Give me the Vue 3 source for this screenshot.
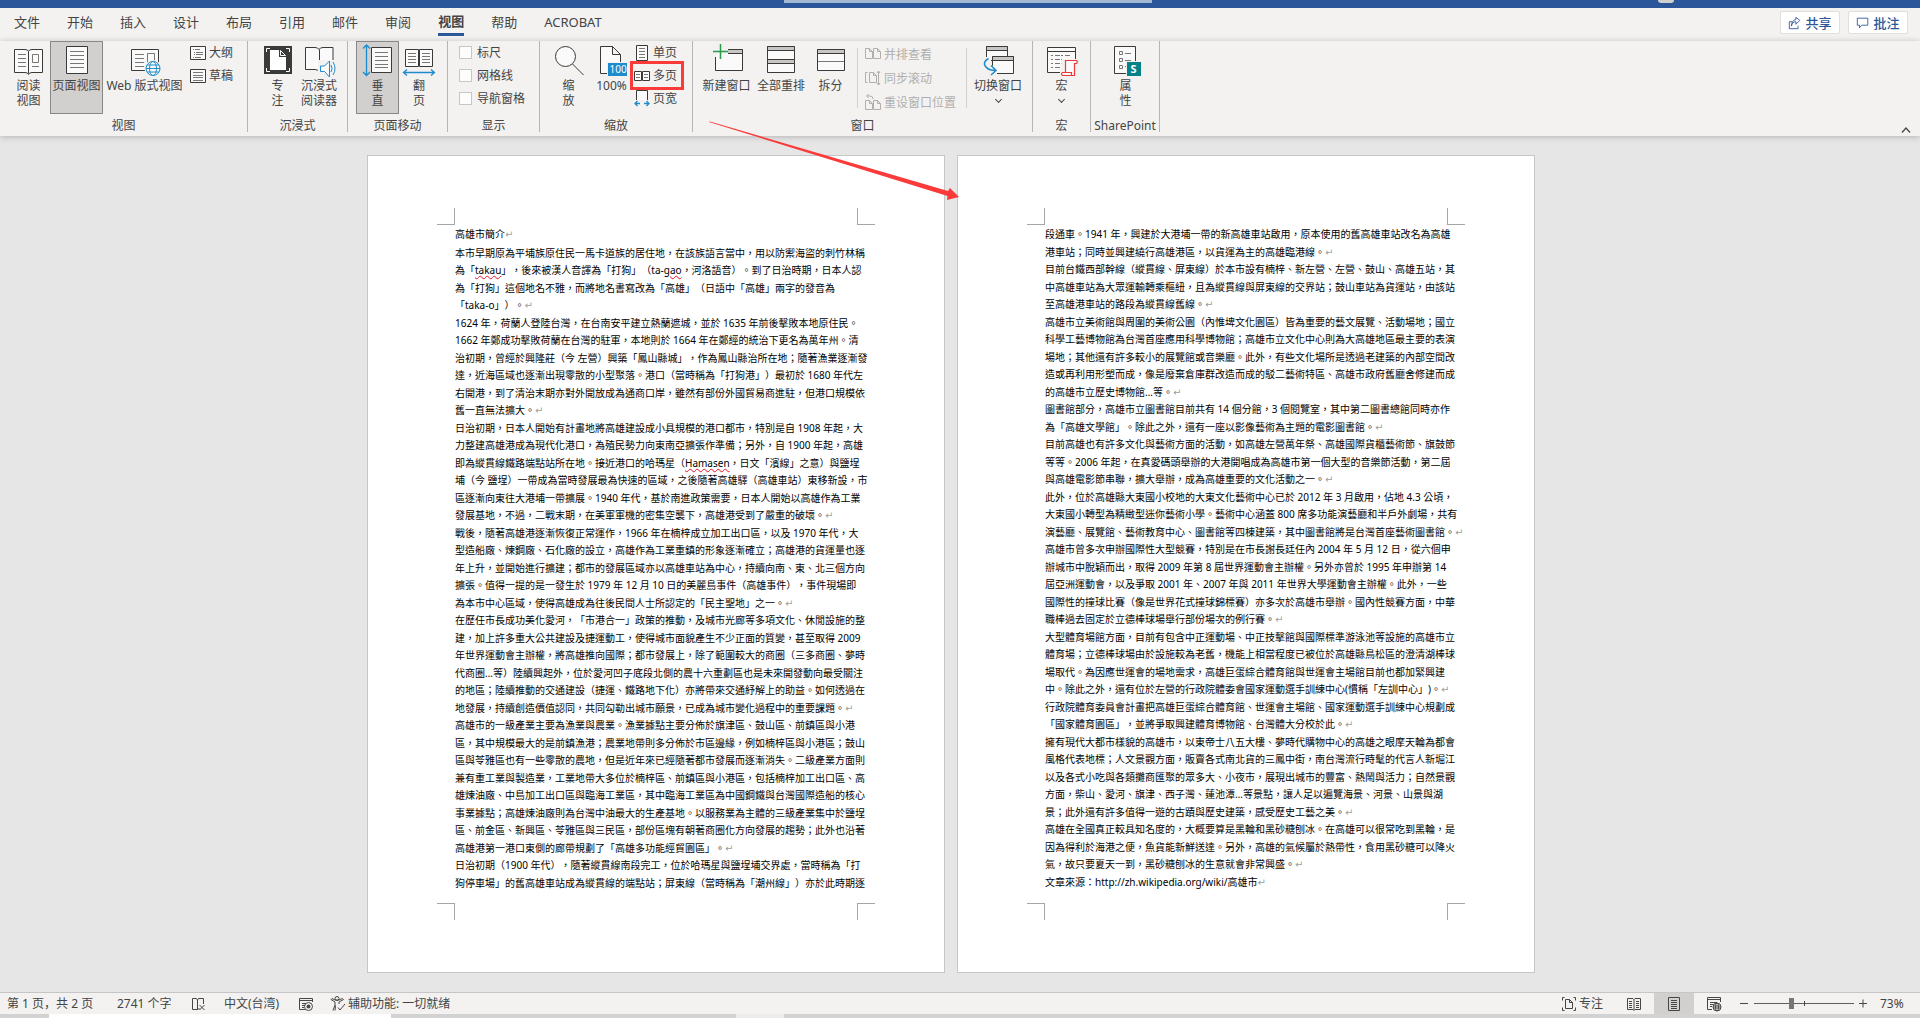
<script setup>
import { ref } from 'vue'

const tabs = ['文件', '开始', '插入', '设计', '布局', '引用', '邮件', '审阅', '视图', '帮助', 'ACROBAT']
const activeTab = ref('视图')
const zoom = ref(37)

const dark = 'fill="#fafafa" stroke="#3b3a39"'
const grey = 'fill="none" stroke="#797775"'
const blue = 'fill="none" stroke="#1e8bcd"'

const icons = {
  read: `<path ${dark} d="M1.5 4.500H12q3 0 3.500 2 .5-2 3.500-2h10.500v23H19q-3 0-3.500 2-.5-2-3.500-2H1.500zM15.500 6.500v22"/><path ${grey} d="M5 9.500h8M5 13.500h8M5 17.500h8M5 21.500h8M19.500 9.500h6v8h-6zM19 21.500h7"/>`,
  page: `<path ${dark} d="M5.500 1.500h21v27h-21z"/><path ${grey} d="M9 6.500h14M9 10.500h14M9 14.500h14M9 18.500h14M9 22.500h14"/>`,
  web: `<path ${dark} d="M2.500 4.500h27v21h-27z"/><path ${grey} d="M6 9.500h9M6 13.500h9M6 17.500h9M6 21.500h9M18.500 18V8.500h7V16"/><circle cx="24" cy="23.500" r="8.500" fill="#f3f2f1"/><g fill="#fafafa" stroke="#1e8bcd"><circle cx="24" cy="23.500" r="7"/><ellipse cx="24" cy="23.500" rx="3.500" ry="7"/><path d="M17 23.500h14M18 20h12M18 27h12"/></g>`,
  focus: `<path fill="#3b3a39" d="M2 1h28v28H2z"/><path fill="none" stroke="#fff" d="M4.500 7V3.500H8M24 3.500h3.500V7M27.500 23v3.500H24M8 26.500H4.500V23"/><path fill="#fff" d="M8 5h9v7h7v13H8z"/><path fill="none" stroke="#fff" d="M18.500 5.500v5h5z"/>`,
  immersive: `<path ${dark} d="M2.500 2.500H12q3 0 4 2 1-2 4-2h10v22H20q-3 0-4 2-1-2-4-2H2.500zM16.500 4.500v22"/><path fill="#f3f2f1" d="M15 15h17v17H15z"/><path fill="#fafafa" stroke="#1e8bcd" d="M17.500 21h4l5-5v16l-5-5.500h-4z"/><path ${blue} d="M28 20q2 3.500 0 7M30 17q4 6.500 0 13"/>`,
  vertical: `<path ${dark} d="M9.500 2.500h20v25h-20z"/><path ${grey} d="M13 7.500h13M13 11.500h13M13 15.500h13M13 19.500h13M13 22.500h13"/><path ${blue} stroke-width="1.300" d="M4.500 0v30M1 3.500 4.500 0 8 3.500M1 27l3.500 3.500L8 27"/>`,
  flip: `<path ${dark} d="M2.500 4.500h13v17h-13zM16.500 4.500h13v17h-13z"/><path ${grey} d="M5 8.500h8M5 11.500h8M5 14.500h8M5 17.500h8M19 8.500h8M19 11.500h8M19 14.500h8M19 17.500h8"/><path ${blue} stroke-width="1.300" d="M1 27.500h30M4 24.500l-3.500 3L4 30.500M28 24.500l3.500 3-3.500 3"/>`,
  magnifier: `<circle cx="12.500" cy="11.500" r="10" ${dark}/><path fill="none" stroke="#3b3a39" d="M19.500 19l11 11"/>`,
  hundred: `<path ${dark} d="M4.500 1.500h12l8 8v19h-20zM16.500 1.500v8h8"/><path fill="#1e8bcd" stroke="#f3f2f1" d="M11.500 17.500h20v14h-20z"/><text x="13.500" y="28" font-size="10" fill="#fff">100</text>`,
  newWindow: `<path ${dark} d="M4.500 4.500h27v21h-27z"/><path fill="#c8c6c4" stroke="#3b3a39" d="M4.500 4.500h27v4h-27z"/><path fill="#f3f2f1" d="M0 0h17v12H0z"/><path fill="none" stroke="#3b3a39" d="M4.500 12v13.500"/><path fill="#fafafa" d="M5 9h13v7H5z"/><path fill="none" stroke="#2b9a47" stroke-width="1.500" d="M9.500-1v15M2 6.500h15"/>`,
  arrange: `<path ${dark} d="M2.500 1.500h27v13h-27zM2.500 14.500h27v13h-27z"/><path fill="#c8c6c4" stroke="#3b3a39" d="M2.500 1.500h27v4h-27zM2.500 14.500h27v4h-27z"/>`,
  split: `<path ${dark} d="M2.500 4.500h27v21h-27z"/><path fill="#c8c6c4" stroke="#3b3a39" d="M2.500 4.500h27v4h-27z"/><path ${grey} d="M3 16.500h26"/>`,
  switchWindow: `<path ${dark} d="M4.500 1.500h21v14h-21z"/><path fill="#c8c6c4" stroke="#3b3a39" d="M4.500 1.500h21v4h-21z"/><path ${dark} d="M10.500 11.500h21v17h-21z"/><path fill="#c8c6c4" stroke="#3b3a39" d="M10.500 11.500h21v4h-21z"/><path fill="#f3f2f1" d="M1 12h8v8l6 3v8H5L1 22z"/><path fill="none" stroke="#3b3a39" d="M10.500 17v3"/><path ${blue} stroke-width="1.500" d="M6.500 13.500Q2 16 2.500 19.500 4 25 13 25.500M9 20.500l5 5-5 4.500"/>`,
  macro: `<path ${dark} d="M1.500 2.500h28v25h-28z"/><path fill="none" stroke="#3b3a39" d="M1.500 6.500h28"/><path ${grey} stroke-dasharray="2 2 5 1" d="M5 10.500h20M5 14.500h14M5 18.500h12M5 22.500h10"/><path fill="#f3f2f1" d="M16 14h17v18H14v-6z"/><path fill="#fafafa" stroke="#f0383a" stroke-width="1.200" d="M19.500 15.500h11q1.500 1 0 3h-2v12h-12q-2-1.500 0-3h3zM16.500 27.500h9v3"/>`,
  props: `<path ${dark} d="M4.500 1.500h21v27h-21z"/><path ${grey} d="M9.500 6.500h3v3h-3zM9.500 13.500h3v3h-3zM9.500 20.500h3v3h-3zM15 8.500h6M15 15.500h6M15 21.500h4"/><path fill="#038387" stroke="#f3f2f1" d="M16.500 16.500h15v15h-15z"/><text x="20.500" y="28" font-size="11" font-weight="700" fill="#fff">S</text>`,
  outline: `<path ${dark} d="M.5 1.500h15v13H.500z"/><path ${grey} d="M3 4.500h1M5 4.500h5M4 7.500h1M6 7.500h7M4 9.500h1M6 9.500h7M3 12.500h1M5 12.500h6"/>`,
  draft: `<path ${dark} d="M.5 1.500h15v13H.500z"/><path ${grey} d="M3 4.500h10M3 7.500h10M3 9.500h10M3 12.500h10"/>`,
  onePage: `<path ${dark} d="M2.500.5h11v15h-11z"/><path ${grey} d="M5 3.500h6M5 6.500h6M5 9.500h6M5 12.500h6"/>`,
  multiPage: `<path ${dark} d="M.5 3.500h7v9h-7zM8.500 3.500h7v9h-7z"/><path ${grey} d="M2 6.500h4M2 9.500h4M10 6.500h4M10 9.500h4"/>`,
  pageWidth: `<path ${dark} d="M2.500 9V-.5h11V9"/><path ${blue} stroke-width="1.300" d="M6 12.500H1M10 12.500h5M3.500 10 1 12.500 3.500 15M12.500 10l2.500 2.500-2.500 2.500"/>`,
  sideBySide: `<path fill="none" stroke="#b1afad" d="M.5 2.500h4l3 3v7h-7zM8.500 2.500h4l3 3v7h-7zM4.500 2.500v3h3M12.500 2.500v3h3"/>`,
  syncScroll: `<path fill="none" stroke="#b1afad" d="M2.500 2.500H.500v10h2M4.500 2.500h4l3 3v7h-7zM8.500 2.500v3h3M13.500 1v14M12 3l1.500-2L15 3M12 13l1.500 2 1.500-2"/>`,
  resetWindow: `<path fill="none" stroke="#b1afad" d="M.5 6.500h4l3 3v6h-7zM8.500 6.500h4l3 3v6h-7zM4.500 6.500v3h3M12.500 6.500v3h3M3.500 0l-2 2 2 2M2 2h3q3 0 3 3"/>`,
  proof: `<path fill="none" stroke="#484644" d="M6.500 13.500h-5v-11h4l1 1.500 1-1.500h5V8M6.500 4v9.500l2-1M8.500 9l5 5M13.500 9l-5 5"/>`,
  record: `<path fill="none" stroke="#484644" d="M7 13.500H1.500v-11h13V6M1.500 4.500h13M4 7.500h4M4 9.500h3M4 11.500h2"/><circle cx="10.500" cy="10.500" r="4" fill="none" stroke="#484644"/><circle cx="10.500" cy="10.500" r="2" fill="#484644"/>`,
  access: `<path fill="none" stroke="#484644" d="M1 3.500 5 6v3l-2 5.500M13.500 3.500 9 6v2M1 3.500l1-1 3 1.500h4l3.500-1.500 1 1M5.500 9.500l-.5 5M8 11.500l2 2.500 5-6"/><circle cx="7" cy="2.500" r="2" fill="none" stroke="#484644"/>`,
  focusSmall: `<path fill="none" stroke="#484644" d="M3.500 1.500h-2v3M12.500 1.500h2v3M14.500 11.500v3h-2M3.500 14.500h-2v-3M4.500 3.500h4l3 3v6h-7zM8.500 3.500v3h3"/>`,
  readSmall: `<path fill="none" stroke="#484644" d="M1.500 2.500H7l1 1 1-1h5.500v11H9l-1 1-1-1H1.500zM8 3.500v10.500M3 5.500h3M3 7.500h3M3 9.500h3M3 11.500h3M10 5.500h3M10 7.500h3M10 9.500h3M10 11.500h3"/>`,
  printSmall: `<path fill="none" stroke="#484644" d="M2.500 1.500h11v13h-11zM5 4.500h6M5 6.500h6M5 8.500h6M5 10.500h6M5 12.500h6"/>`,
  webSmall: `<path fill="none" stroke="#484644" d="M6 13.500H1.500v-12h13V6M1.500 3.500h13M4 6.500h7M4 8.500h4M4 10.500h2"/><g fill="#f3f2f1" stroke="#484644"><circle cx="11" cy="11" r="4"/><ellipse cx="11" cy="11" rx="1.500" ry="4"/><path d="M7 10h8M7 12h8"/></g>`,
  share: `<path fill="none" stroke="#2b579a" d="M5 6.500H1.500v8h10V11M4 11.500Q4.500 6.500 9 6.500V9.500l4.500-4.500L9 1.500v2.500Q4 5 4 11.500"/>`,
  comment: `<path fill="none" stroke="#2b579a" d="M1.500 2.500h12v8h-7L4 13.500v-3H1.500z"/>`
}

const pages = [
  [
    '高雄市簡介¶',
    '本市早期原為平埔族原住民一馬卡道族的居住地，在該族語言當中，用以防禦海盜的刺竹林稱',
    '為「~takau~」，後來被漢人音譯為「打狗」（ta-~gao~，河洛語音）。到了日治時期，日本人認',
    '為「打狗」這個地名不雅，而將地名書寫改為「高雄」（日語中「高雄」兩字的發音為',
    '「taka-o」）。¶',
    '1624 年，荷蘭人登陸台灣，在台南安平建立熱蘭遮城，並於 1635 年前後擊敗本地原住民。',
    '1662 年鄭成功擊敗荷蘭在台灣的駐軍，本地則於 1664 年在鄭經的統治下更名為萬年州。清',
    '治初期，曾經於興隆莊（今 左營）興築「鳳山縣城」，作為鳳山縣治所在地；隨著漁業逐漸發',
    '達，近海區域也逐漸出現零散的小型聚落。港口（當時稱為「打狗港」）最初於 1680 年代左',
    '右開港，到了清治末期亦對外開放成為通商口岸，雖然有部份外國貿易商進駐，但港口規模依',
    '舊一直無法擴大。¶',
    '日治初期，日本人開始有計畫地將高雄建設成小具規模的港口都市，特別是自 1908 年起，大',
    '力整建高雄港成為現代化港口，為殖民勢力向東南亞擴張作準備；另外，自 1900 年起，高雄',
    '即為縱貫線鐵路端點站所在地。接近港口的哈瑪星（~Hamasen~，日文「濱線」之意）與鹽埕',
    '埔（今 鹽埕）一帶成為當時發展最為快速的區域，之後隨著高雄驛（高雄車站）東移新設，市',
    '區逐漸向東往大港埔一帶擴展。1940 年代，基於南進政策需要，日本人開始以高雄作為工業',
    '發展基地，不過，二戰末期，在美軍軍機的密集空襲下，高雄港受到了嚴重的破壞。¶',
    '戰後，隨著高雄港逐漸恢復正常運作，1966 年在楠梓成立加工出口區，以及 1970 年代，大',
    '型造船廠、煉鋼廠、石化廠的設立，高雄作為工業重鎮的形象逐漸確立；高雄港的貨運量也逐',
    '年上升，並開始進行擴建；都市的發展區域亦以高雄車站為中心，持續向南、東、北三個方向',
    '擴張。值得一提的是一發生於 1979 年 12 月 10 日的美麗島事件（高雄事件），事件現場即',
    '為本市中心區域，使得高雄成為往後民間人士所認定的「民主聖地」之一。¶',
    '在歷任市長成功美化愛河，「市港合一」政策的推動，及城市光廊等多項文化、休閒設施的整',
    '建，加上許多重大公共建設及捷運動工，使得城市面貌產生不少正面的質變，甚至取得 2009',
    '年世界運動會主辦權，將高雄推向國際；都市發展上，除了範圍較大的商圈（三多商圈、夢時',
    '代商圈…等）陸續興起外，位於愛河凹子底段北側的農十六重劃區也是未來開發動向最受關注',
    '的地區；陸續推動的交通建設（捷運、鐵路地下化）亦將帶來交通紓解上的助益。如何透過在',
    '地發展，持續創造價值認同，共同勾勒出城市願景，已成為城市變化過程中的重要課題。¶',
    '高雄市的一級產業主要為漁業與農業。漁業據點主要分佈於旗津區、鼓山區、前鎮區與小港',
    '區，其中規模最大的是前鎮漁港；農業地帶則多分佈於市區邊緣，例如楠梓區與小港區；鼓山',
    '區與苓雅區也有一些零散的農地，但是近年來已經隨著都市發展而逐漸消失。二級產業方面則',
    '兼有重工業與製造業，工業地帶大多位於楠梓區、前鎮區與小港區，包括楠梓加工出口區、高',
    '雄煉油廠、中島加工出口區與臨海工業區，其中臨海工業區為中國鋼鐵與台灣國際造船的核心',
    '事業據點；高雄煉油廠則為台灣中油最大的生產基地。以服務業為主體的三級產業集中於鹽埕',
    '區、前金區、新興區、苓雅區與三民區，部份區塊有朝著商圈化方向發展的趨勢；此外也沿著',
    '高雄港第一港口東側的廊帶規劃了「高雄多功能經貿園區」。¶',
    '日治初期（1900 年代），隨著縱貫線南段完工，位於哈瑪星與鹽埕埔交界處，當時稱為「打',
    '狗停車場」的舊高雄車站成為縱貫線的端點站；屏東線（當時稱為「潮州線」）亦於此時期逐'
  ],
  [
    '段通車。1941 年，興建於大港埔一帶的新高雄車站啟用，原本使用的舊高雄車站改名為高雄',
    '港車站；同時並興建繞行高雄港區，以貨運為主的高雄臨港線。¶',
    '目前台鐵西部幹線（縱貫線、屏東線）於本市設有楠梓、新左營、左營、鼓山、高雄五站，其',
    '中高雄車站為大眾運輸轉乘樞紐，且為縱貫線與屏東線的交界站；鼓山車站為貨運站，由該站',
    '至高雄港車站的路段為縱貫線舊線。¶',
    '高雄市立美術館與周圍的美術公園（內惟埤文化園區）皆為重要的藝文展覽、活動場地；國立',
    '科學工藝博物館為台灣首座應用科學博物館；高雄市立文化中心則為大高雄地區最主要的表演',
    '場地；其他還有許多較小的展覽館或音樂廳。此外，有些文化場所是透過老建築的內部空間改',
    '造或再利用形塑而成，像是廢棄倉庫群改造而成的駁二藝術特區、高雄市政府舊廳舍修建而成',
    '的高雄市立歷史博物館…等。¶',
    '圖書館部分，高雄市立圖書館目前共有 14 個分館，3 個閱覽室，其中第二圖書總館同時亦作',
    '為「高雄文學館」。除此之外，還有一座以影像藝術為主題的電影圖書館。¶',
    '目前高雄也有許多文化與藝術方面的活動，如高雄左營萬年祭、高雄國際貨櫃藝術節、旗鼓節',
    '等等。2006 年起，在真愛碼頭舉辦的大港開唱成為高雄市第一個大型的音樂節活動，第二屆',
    '與高雄電影節串聯，擴大舉辦，成為高雄重要的文化活動之一。¶',
    '此外，位於高雄縣大東國小校地的大東文化藝術中心已於 2012 年 3 月啟用，佔地 4.3 公頃，',
    '大東國小轉型為精緻型迷你藝術小學。藝術中心涵蓋 800 席多功能演藝廳和半戶外劇場，共有',
    '演藝廳、展覽館、藝術教育中心、圖書館等四棟建築，其中圖書館將是台灣首座藝術圖書館。¶',
    '高雄市曾多次申辦國際性大型競賽，特別是在市長謝長廷任內 2004 年 5 月 12 日，從六個申',
    '辦城市中脫穎而出，取得 2009 年第 8 屆世界運動會主辦權。另外亦曾於 1995 年申辦第 14',
    '屆亞洲運動會，以及爭取 2001 年、2007 年與 2011 年世界大學運動會主辦權。此外，一些',
    '國際性的撞球比賽（像是世界花式撞球錦標賽）亦多次於高雄市舉辦。國內性競賽方面，中華',
    '職棒過去固定於立德棒球場舉行部份場次的例行賽。¶',
    '大型體育場館方面，目前有包含中正運動場、中正技擊館與國際標準游泳池等設施的高雄市立',
    '體育場；立德棒球場由於設施較為老舊，機能上相當程度已被位於高雄縣鳥松區的澄清湖棒球',
    '場取代。為因應世運會的場地需求，高雄巨蛋綜合體育館與世運會主場館目前也都加緊興建',
    '中。除此之外，還有位於左營的行政院體委會國家運動選手訓練中心(慣稱「左訓中心」)。¶',
    '行政院體育委員會計畫把高雄巨蛋綜合體育館、世運會主場館、國家運動選手訓練中心規劃成',
    '「國家體育園區」，並將爭取興建體育博物館、台灣體大分校於此。¶',
    '擁有現代大都市樣貌的高雄市，以東帝士八五大樓、夢時代購物中心的高雄之眼摩天輪為都會',
    '風格代表地標；人文景觀方面，販賣各式南北貨的三鳳中街，南台灣流行時髦的代言人新堀江',
    '以及各式小吃與各類攤商匯聚的眾多大、小夜市，展現出城市的豐富、熱鬧與活力；自然景觀',
    '方面，柴山、愛河、旗津、西子灣、蓮池潭…等景點，讓人足以遍覽海景、河景、山景與湖',
    '景；此外還有許多值得一遊的古蹟與歷史建築，感受歷史工藝之美。¶',
    '高雄在全國真正較具知名度的，大概要算是黑輪和黑砂糖刨冰。在高雄可以很常吃到黑輪，是',
    '因為得利於海港之便，魚貨能新鮮送達。另外，高雄的氣候屬於熱帶性，食用黑砂糖可以降火',
    '氣，故只要夏天一到，黑砂糖刨冰的生意就會非常興盛。¶',
    '文章來源：http://zh.wikipedia.org/wiki/高雄市¶'
  ]
]

// ~word~ marks a misspelling, ¶ the end of a paragraph
const docs = pages.map(lines => lines.map(line => ({
  end: line.endsWith('¶'),
  parts: line.replace('¶', '').split('~')
})))
</script>

<template>
  <div class="app">
    <header class="titlebar">
      <span class="search"></span>
      <span class="avatar"></span>
    </header>

    <nav class="tabs">
      <button v-for="t in tabs" :key="t" class="tab" :class="{ active: t === activeTab }" @click="activeTab = t">{{ t }}</button>
      <div class="actions">
        <button class="action"><svg class="small" viewBox="0 0 16 16" v-html="icons.share" />共享</button>
        <button class="action"><svg class="small" viewBox="0 0 16 16" v-html="icons.comment" />批注</button>
      </div>
    </nav>

    <div class="ribbon">
      <section class="group g-views">
        <div class="tools">
          <button class="big w43"><svg viewBox="0 0 32 32" v-html="icons.read" />阅读<br>视图</button>
          <button class="big w53 on"><svg viewBox="0 0 32 32" v-html="icons.page" />页面视图</button>
          <button class="big w83"><svg viewBox="0 0 32 32" v-html="icons.web" />Web 版式视图</button>
          <div class="stack">
            <button class="row"><svg class="small" viewBox="0 0 16 16" v-html="icons.outline" />大纲</button>
            <button class="row"><svg class="small" viewBox="0 0 16 16" v-html="icons.draft" />草稿</button>
          </div>
        </div>
        <h2>视图</h2>
      </section>

      <section class="group g-immersive">
        <div class="tools">
          <button class="big w43"><svg viewBox="0 0 32 32" v-html="icons.focus" />专<br>注</button>
          <button class="big w40"><svg viewBox="0 0 32 32" v-html="icons.immersive" />沉浸式<br>阅读器</button>
        </div>
        <h2>沉浸式</h2>
      </section>

      <section class="group g-immersive">
        <div class="tools">
          <button class="big w43 on"><svg viewBox="0 0 32 32" v-html="icons.vertical" />垂<br>直</button>
          <button class="big w40"><svg viewBox="0 0 32 32" v-html="icons.flip" />翻<br>页</button>
        </div>
        <h2>页面移动</h2>
      </section>

      <section class="group g-show">
        <div class="tools">
          <div class="stack">
            <label class="row"><input type="checkbox">标尺</label>
            <label class="row"><input type="checkbox">网格线</label>
            <label class="row"><input type="checkbox">导航窗格</label>
          </div>
        </div>
        <h2>显示</h2>
      </section>

      <section class="group g-zoom">
        <div class="tools">
          <button class="big w43"><svg viewBox="0 0 32 32" v-html="icons.magnifier" />缩<br>放</button>
          <button class="big w43"><svg viewBox="0 0 32 32" v-html="icons.hundred" />100%</button>
          <div class="stack flush">
            <button class="row"><svg class="small" viewBox="0 0 16 16" v-html="icons.onePage" />单页</button>
            <button class="row marked"><svg class="small" viewBox="0 0 16 16" v-html="icons.multiPage" />多页</button>
            <button class="row"><svg class="small" viewBox="0 0 16 16" v-html="icons.pageWidth" />页宽</button>
          </div>
        </div>
        <h2>缩放</h2>
      </section>

      <section class="group g-window">
        <div class="tools">
          <button class="big w53"><svg viewBox="0 0 32 32" v-html="icons.newWindow" />新建窗口</button>
          <button class="big w56"><svg viewBox="0 0 32 32" v-html="icons.arrange" />全部重排</button>
          <button class="big w43"><svg viewBox="0 0 32 32" v-html="icons.split" />拆分</button>
          <div class="stack inner">
            <button class="row" disabled><svg class="small" viewBox="0 0 16 16" v-html="icons.sideBySide" />并排查看</button>
            <button class="row" disabled><svg class="small" viewBox="0 0 16 16" v-html="icons.syncScroll" />同步滚动</button>
            <button class="row" disabled><svg class="small" viewBox="0 0 16 16" v-html="icons.resetWindow" />重设窗口位置</button>
          </div>
          <button class="big w56"><svg viewBox="0 0 32 32" v-html="icons.switchWindow" />切换窗口<i class="caret"></i></button>
        </div>
        <h2>窗口</h2>
      </section>

      <section class="group g-macro">
        <div class="tools">
          <button class="big w43"><svg viewBox="0 0 32 32" v-html="icons.macro" />宏<i class="caret"></i></button>
        </div>
        <h2>宏</h2>
      </section>

      <section class="group g-share">
        <div class="tools">
          <button class="big w43"><svg viewBox="0 0 32 32" v-html="icons.props" />属<br>性</button>
        </div>
        <h2>SharePoint</h2>
      </section>

      <button class="collapse" aria-label="折叠功能区"><svg viewBox="0 0 10 6"><path d="M1 5.500 5 1l4 4.500" fill="none" stroke="#484644" stroke-width="1.300" /></svg></button>
    </div>

    <main class="canvas">
      <article v-for="(doc, p) in docs" :key="p" class="sheet">
        <div class="corners top"><span></span><span></span></div>
        <div class="text">
          <p v-for="(line, i) in doc" :key="i" :class="{ title: p === 0 && i === 0 }"><template v-for="(part, k) in line.parts" :key="k"><u v-if="k % 2">{{ part }}</u><template v-else>{{ part }}</template></template><span v-if="line.end" class="mark">↵</span></p>
        </div>
        <div class="corners bottom"><span></span><span></span></div>
      </article>
    </main>

    <footer class="status">
      <span class="s-page">第 1 页，共 2 页</span>
      <span class="s-words">2741 个字</span>
      <svg class="small" viewBox="0 0 16 16" v-html="icons.proof" />
      <span class="s-lang">中文(台湾)</span>
      <svg class="small" viewBox="0 0 16 16" v-html="icons.record" />
      <span class="s-access"><svg class="small" viewBox="0 0 16 16" v-html="icons.access" />辅助功能: 一切就绪</span>
      <div class="views">
        <button class="view focus"><svg class="small" viewBox="0 0 16 16" v-html="icons.focusSmall" />专注</button>
        <button class="view" aria-label="阅读视图"><svg class="small" viewBox="0 0 16 16" v-html="icons.readSmall" /></button>
        <button class="view current" aria-label="页面视图"><svg class="small" viewBox="0 0 16 16" v-html="icons.printSmall" /></button>
        <button class="view" aria-label="Web 版式视图"><svg class="small" viewBox="0 0 16 16" v-html="icons.webSmall" /></button>
        <button class="step" aria-label="缩小"><svg viewBox="0 0 10 10"><path d="M1 4.500h8" stroke="#484644" /></svg></button>
        <input v-model="zoom" type="range" min="0" max="100" aria-label="缩放">
        <button class="step" aria-label="放大"><svg viewBox="0 0 10 10"><path d="M1 4.500h8M5 .5v8" stroke="#484644" /></svg></button>
        <span class="percent">73%</span>
      </div>
    </footer>
    <div class="taskbar"><span class="window"></span><span class="task"></span></div>

    <svg class="arrow" viewBox="0 0 252 82"><path d="M1 2 2 1.500 240 71l2-3 9 9-12 3 .5-4z" fill="#fb3a3a" /></svg>
  </div>
</template>

<style>
body {
  margin: 0;
}
</style>

<style scoped>
.app {
  position: relative;
  display: flex;
  flex-direction: column;
  min-height: 100vh;
  overflow: hidden;
  background: #e6e6e6;
  color: #444;
  font: 12px/15px "Noto Sans", "Noto Sans CJK SC", sans-serif;
}
button {
  margin: 0;
  padding: 0;
  border: 0;
  background: none;
  color: inherit;
  font: inherit;
}
svg {
  display: block;
  flex: none;
  overflow: visible;
}
.small {
  width: 16px;
  height: 16px;
}
.titlebar {
  position: relative;
  display: flex;
  justify-content: center;
  height: 8px;
  padding-left: 16px;
  background: #2b579a;
}
.search {
  width: 368px;
  height: 3px;
  background: #a3b8d2;
}
.avatar {
  position: absolute;
  right: 246px;
  top: 0;
  width: 16px;
  height: 3px;
  border-radius: 0 0 8px 8px;
  background: #d2d0ce;
}
.tabs {
  display: flex;
  gap: 27px;
  height: 33px;
  padding-left: 14px;
  background: #f3f2f1;
  font-size: 13px;
  line-height: 26px;
}
.tab {
  display: block;
  flex: none;
  height: 28px;
  box-sizing: border-box;
}
.tab.active {
  border-bottom: 3px solid #2b579a;
  font-weight: 700;
}
.actions {
  display: flex;
  gap: 8px;
  margin-left: auto;
  padding: 3px 12px 0 0;
}
.action {
  display: flex;
  align-items: center;
  justify-content: center;
  gap: 3px;
  width: 60px;
  height: 23px;
  box-sizing: border-box;
  border: 1px solid #e1dfdd;
  border-radius: 2px;
  background: #fff;
  color: #2b579a;
  font-weight: 500;
}
.action .small {
  width: 14px;
  height: 14px;
}
.ribbon {
  position: relative;
  display: flex;
  height: 95px;
  background: #f3f2f1;
  box-shadow: 0 1px 6px #b4b4b4;
}
.group {
  position: relative;
  display: flex;
  flex-direction: column;
  flex: none;
  height: 91px;
  box-sizing: border-box;
  border-right: 1px solid #b8b6b4;
}
.g-views { width: 248px; padding-left: 7px; }
.g-immersive { width: 100px; padding-left: 8px; }
.g-show { width: 92px; padding-left: 7px; }
.g-zoom { width: 153px; padding-left: 7px; }
.g-window { width: 340px; padding-left: 7px; }
.g-macro { width: 58px; padding-left: 7px; }
.g-share { width: 69px; padding-left: 13px; }
.tools {
  display: flex;
  height: 73px;
}
h2 {
  position: absolute;
  left: 0;
  right: 0;
  bottom: -1px;
  margin: 0;
  font: inherit;
  text-align: center;
  white-space: nowrap;
}
.big {
  display: flex;
  flex-direction: column;
  align-items: center;
  flex: none;
  height: 73px;
  padding-top: 3px;
  box-sizing: border-box;
  border: 1px solid transparent;
  text-align: center;
  white-space: nowrap;
}
.big > svg {
  width: 32px;
  height: 32px;
  margin-bottom: 1px;
}
.big.on {
  border-color: #8a8886;
  background: #d2d0ce;
}
.w40 { width: 40px; }
.w43 { width: 43px; }
.w53 { width: 53px; }
.w56 { width: 56px; }
.w83 { width: 83px; }
.caret {
  width: 4px;
  height: 4px;
  margin-top: 4px;
  border: solid #484644;
  border-width: 0 1px 1px 0;
  rotate: 45deg;
}
.stack {
  display: flex;
  flex-direction: column;
  padding-left: 4px;
}
.stack.flush {
  padding-left: 0;
}
.row {
  display: flex;
  align-items: center;
  gap: 3px;
  height: 23px;
  white-space: nowrap;
}
.flush .row {
  width: 48px;
  padding-left: 1px;
}
.marked {
  position: relative;
  outline: 3px solid #fb3a3a;
}
.row:disabled {
  height: 24px;
  color: #b1afad;
}
.inner {
  height: 73px;
  margin: 1px 3px 0 5px;
  padding: 0 11px 0 8px;
  background: linear-gradient(#d2d0ce, #d2d0ce) 0 6px / 1px 60px no-repeat, linear-gradient(#d2d0ce, #d2d0ce) 100% 6px / 1px 60px no-repeat;
}
.row input {
  appearance: none;
  width: 13px;
  height: 13px;
  margin: 0 2px 0 0;
  border: 1px solid #c8c6c4;
  background: #fdfdfd;
}
.collapse {
  position: absolute;
  right: 9px;
  bottom: 3px;
}
.collapse svg {
  width: 10px;
  height: 6px;
}
.canvas {
  display: flex;
  justify-content: center;
  align-items: flex-start;
  gap: 12px;
  flex: 1;
  padding: 19px 18px 19px 0;
}
.sheet {
  display: flex;
  flex-direction: column;
  width: 578px;
  min-height: 818px;
  box-sizing: border-box;
  padding: 52px 69px;
  border: 1px solid #c6c6c6;
  background: #fff;
}
.corners {
  display: flex;
  justify-content: space-between;
}
.corners span {
  width: 18px;
  height: 17px;
  box-sizing: border-box;
  border: 0 solid #a6a6a6;
}
.top span { border-bottom-width: 1px; }
.bottom span { border-top-width: 1px; }
.corners span:first-child { border-right-width: 1px; }
.corners span:last-child { border-left-width: 1px; }
.bottom {
  margin-top: auto;
}
.text {
  padding: 1px 0 0 18px;
  color: #000;
  font-family: "Noto Sans", "Noto Sans CJK TC", sans-serif;
  font-size: 10px;
  text-spacing-trim: space-all;
}
p {
  height: 17px;
  margin: 0;
  line-height: 17px;
  white-space: nowrap;
}
p:nth-child(even) {
  height: 18px;
  line-height: 18px;
}
.title {
  margin-bottom: 1px;
}
u {
  text-decoration: underline wavy #e81123 1px;
  text-underline-offset: 1px;
}
.mark {
  color: #a0a0a0;
  font-family: "DejaVu Sans", sans-serif;
  line-height: 1;
}
.status {
  display: flex;
  align-items: center;
  height: 21px;
  padding-left: 7px;
  border-top: 1px solid #c6c6c6;
  background: #f3f2f1;
  white-space: nowrap;
}
.s-page { width: 110px; }
.s-words { width: 74px; }
.s-lang { width: 74px; padding-left: 17px; }
.s-access {
  display: flex;
  align-items: center;
  gap: 2px;
  padding-left: 16px;
}
.views {
  display: flex;
  align-items: center;
  height: 21px;
  margin-left: auto;
}
.view {
  display: flex;
  align-items: center;
  justify-content: center;
  width: 40px;
  height: 21px;
}
.view.focus {
  width: 44px;
  margin-right: 10px;
  gap: 2px;
}
.view.current {
  background: #d2d0ce;
}
.step {
  width: 10px;
  height: 10px;
}
.step svg {
  width: 10px;
  height: 10px;
}
.view + .step {
  margin-left: 5px;
}
input[type="range"] {
  appearance: none;
  width: 100px;
  height: 12px;
  margin: 0 4px 0 5px;
  background: linear-gradient(#484644, #484644) 50px 3px / 1px 5px no-repeat, linear-gradient(#605e5c, #605e5c) 0 5px / 100% 1px no-repeat;
}
input[type="range"]::-webkit-slider-thumb {
  appearance: none;
  width: 5px;
  height: 11px;
  background: #797775;
}
.percent {
  width: 28px;
  padding: 0 12px;
}
.taskbar {
  display: flex;
  gap: 345px;
  height: 4px;
  padding-left: 49px;
  background: #d2d2d2;
}
.window {
  width: 342px;
  background: #fff;
}
.task {
  width: 48px;
  background: #ececec;
}
.arrow {
  position: absolute;
  left: 708px;
  top: 120px;
  width: 252px;
  height: 82px;
}
</style>
